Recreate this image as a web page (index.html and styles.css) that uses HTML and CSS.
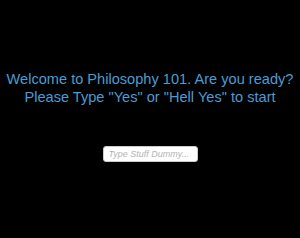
FILE: index.html
```html
<!DOCTYPE html>
<html lang="en">
<head>
  <meta charset="UTF-8" />
  <title>Philosophy 101</title>
  <link rel="stylesheet" href="styles.css">
</head>
<body>
  <div class="screen">
    <p class="prompt">Welcome to Philosophy 101. Are you ready?<br>Please Type "Yes" or "Hell Yes" to start</p>
    <input class="answer" type="text" placeholder="Type Stuff Dummy...">
  </div>
</body>
</html>
```
FILE: styles.css
```css
body {
  background-color: #000;
  margin: 0;
  padding: 0;
  font-family: "Liberation Sans", Arial, sans-serif;
}
.screen {
  display: flex;
  flex-direction: column;
  align-items: center;
  padding-top: 70px;
}
.prompt {
  margin: 0;
  color: #4a9cd6;
  font-size: 14.6px;
  line-height: 18px;
  text-align: center;
}
.answer {
  margin-top: 40px;
  width: 83px;
  height: 12px;
  padding: 1px 5px;
  border: 1px solid #ccc;
  border-radius: 3px;
  background-color: #fff;
  font-family: "Liberation Sans", Arial, sans-serif;
  font-size: 9px;
  font-style: italic;
  outline: none;
}
.answer::placeholder {
  color: #b4b4b4;
}
```
